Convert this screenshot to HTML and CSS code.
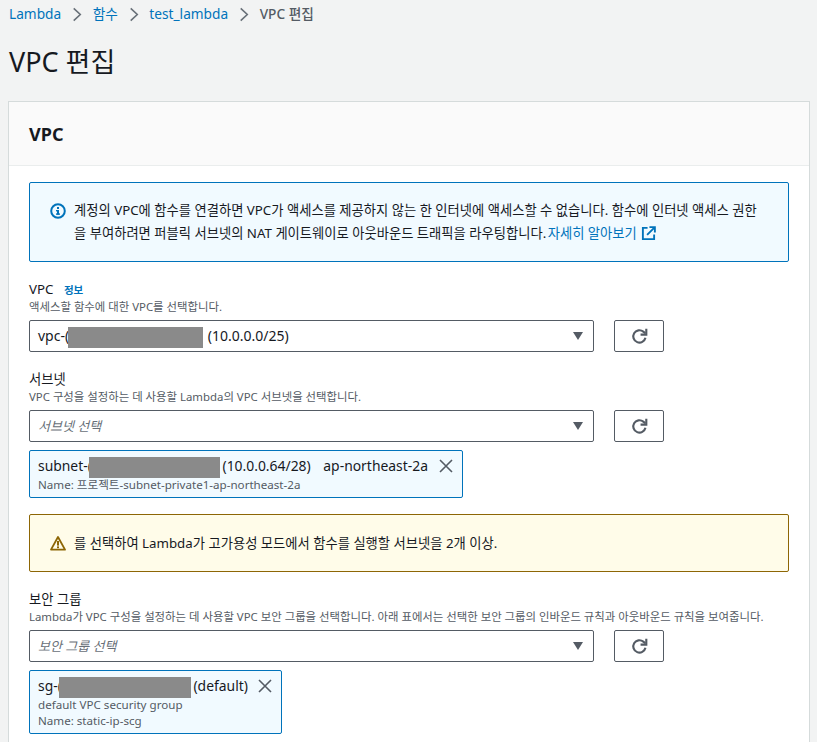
FILE: index.html
```html
<!DOCTYPE html>
<html lang="ko">
<head>
    <meta charset="utf-8">
    <title>VPC 편집</title>
    <link rel="stylesheet" href="styles.css">
</head>
<body>
    <svg class="defs" width="0" height="0">
        <symbol id="refresh" viewBox="0 0 16 16">
            <path d="M13.6 9.2A5.8 5.8 0 1 1 11.6 3.4L13.4 5" fill="none" stroke="currentColor" stroke-width="2"/>
            <path d="M14.4 .8V6.2H9" fill="none" stroke="currentColor" stroke-width="2"/>
        </symbol>
        <symbol id="close" viewBox="0 0 16 16">
            <path d="M2 2L14 14M14 2L2 14" fill="none" stroke="currentColor" stroke-width="1.6"/>
        </symbol>
    </svg>

    <nav class="crumbs">
        <a href="#">Lambda</a>
        <svg class="sep" viewBox="0 0 10 16"><path d="M1.5 1.5L8.5 8L1.5 14.5" fill="none" stroke="currentColor" stroke-width="1.7"/></svg>
        <a href="#">함수</a>
        <svg class="sep" viewBox="0 0 10 16"><path d="M1.5 1.5L8.5 8L1.5 14.5" fill="none" stroke="currentColor" stroke-width="1.7"/></svg>
        <a href="#">test_lambda</a>
        <svg class="sep" viewBox="0 0 10 16"><path d="M1.5 1.5L8.5 8L1.5 14.5" fill="none" stroke="currentColor" stroke-width="1.7"/></svg>
        <span class="crumb-current">VPC 편집</span>
    </nav>

    <h1 class="page-title">VPC 편집</h1>

    <div class="card">
        <div class="card-head">VPC</div>
        <div class="card-body">
            <div class="alert alert-info">
                <svg class="alert-icon" viewBox="0 0 16 16">
                    <circle cx="8" cy="8" r="6.8" fill="none" stroke="#0073bb" stroke-width="2"/>
                    <rect x="7" y="7" width="2" height="4.6" fill="#0073bb"/>
                    <rect x="6" y="7" width="2" height="1.4" fill="#0073bb"/>
                    <rect x="6" y="10.4" width="4" height="1.4" fill="#0073bb"/>
                    <rect x="7" y="4" width="2" height="2" fill="#0073bb"/>
                </svg>
                <p>계정의 VPC에 함수를 연결하면 VPC가 액세스를 제공하지 않는 한 인터넷에 액세스할 수 없습니다. 함수에 인터넷 액세스 권한<br>을 부여하려면 퍼블릭 서브넷의 NAT 게이트웨이로 아웃바운드 트래픽을 라우팅합니다. <a class="learn" href="#">자세히 알아보기</a>
                    <svg class="ext" viewBox="0 0 16 16">
                        <path d="M7 2H2V14H14V9" fill="none" stroke="#0073bb" stroke-width="2"/>
                        <path d="M6.5 9.5L14 2M9 1.2H14.8V7" fill="none" stroke="#0073bb" stroke-width="2"/>
                    </svg>
                </p>
            </div>

            <div class="field">
                <div class="label">VPC <a class="info" href="#">정보</a></div>
                <div class="desc">액세스할 함수에 대한 VPC를 선택합니다.</div>
                <div class="select-row">
                    <div class="select">vpc-(<span class="mask mask-vpc"></span> (10.0.0.0/25)<i class="caret"></i></div>
                    <button class="refresh" type="button"><svg><use href="#refresh"/></svg></button>
                </div>
            </div>

            <div class="field">
                <div class="label">서브넷</div>
                <div class="desc">VPC 구성을 설정하는 데 사용할 Lambda의 VPC 서브넷을 선택합니다.</div>
                <div class="select-row">
                    <div class="select placeholder">서브넷 선택<i class="caret"></i></div>
                    <button class="refresh" type="button"><svg><use href="#refresh"/></svg></button>
                </div>
                <div class="token token-subnet">
                    <div>
                        <div class="token-main">subnet-(<span class="mask mask-subnet"></span> (10.0.0.64/28) <span class="az">ap-northeast-2a</span></div>
                        <div class="token-sub">Name: 프로젝트-subnet-private1-ap-northeast-2a</div>
                    </div>
                    <svg class="token-x"><use href="#close"/></svg>
                </div>
            </div>

            <div class="alert alert-warn">
                <svg class="alert-icon" viewBox="0 0 16 16">
                    <path d="M8 2L15 14.6H1Z" fill="none" stroke="#8d6605" stroke-width="1.8" stroke-linejoin="round"/>
                    <rect x="7" y="6" width="2" height="4.6" fill="#8d6605"/>
                    <rect x="7" y="11.4" width="2" height="1.8" fill="#8d6605"/>
                </svg>
                <p>를 선택하여 Lambda가 고가용성 모드에서 함수를 실행할 서브넷을 2개 이상.</p>
            </div>

            <div class="field">
                <div class="label">보안 그룹</div>
                <div class="desc">Lambda가 VPC 구성을 설정하는 데 사용할 VPC 보안 그룹을 선택합니다. 아래 표에서는 선택한 보안 그룹의 인바운드 규칙과 아웃바운드 규칙을 보여줍니다.</div>
                <div class="select-row">
                    <div class="select placeholder">보안 그룹 선택<i class="caret"></i></div>
                    <button class="refresh" type="button"><svg><use href="#refresh"/></svg></button>
                </div>
                <div class="token token-sg">
                    <div>
                        <div class="token-main">sg-(<span class="mask mask-sg"></span> (default)</div>
                        <div class="token-sub">default VPC security group</div>
                        <div class="token-sub">Name: static-ip-scg</div>
                    </div>
                    <svg class="token-x"><use href="#close"/></svg>
                </div>
            </div>
        </div>
    </div>
</body>
</html>
```

FILE: styles.css
```css
* {
    box-sizing: border-box;
}

body {
    margin: 0;
    background-color: #f2f3f3;
    color: #16191f;
    font-family: "Noto Sans", "Noto Sans CJK KR", sans-serif;
    font-size: 14px;
    line-height: 20px;
}

a {
    color: #0073bb;
    text-decoration: none;
}

.defs {
    display: block;
    height: 0;
}

.crumbs {
    display: flex;
    align-items: center;
    height: 28px;
    padding-left: 9px;
    font-size: 13.7px;
}

.sep {
    width: 10px;
    height: 15px;
    margin: 0 10.5px 0 11px;
    color: #687078;
}

.crumb-current {
    color: #545b64;
    font-weight: 500;
}

.page-title {
    margin: 0;
    padding: 16px 0 0 9px;
    height: 73px;
    font-size: 27px;
    line-height: 36px;
    font-weight: 400;
}

.card {
    margin: 0 7px 0 8px;
    height: 641px;
    background-color: #fff;
    border: 1px solid #d5dbdb;
    border-bottom: none;
}

.card-head {
    height: 64px;
    padding: 21px 20px 0;
    background-color: #fafafa;
    border-bottom: 1px solid #eaeded;
    font-size: 18px;
    line-height: 22px;
    font-weight: 700;
}

.card-body {
    padding: 16px 20px 0;
}

.alert {
    display: flex;
    width: 760px;
    border: 1px solid;
    border-radius: 2px;
    padding: 0 20px;
    font-size: 13.3px;
}

.alert p {
    margin: 0;
    white-space: nowrap;
}

.alert-info {
    height: 80px;
    padding-top: 16px;
    background-color: #f1faff;
    border-color: #0073bb;
    line-height: 23px;
}

.alert-warn {
    height: 58px;
    margin-top: 16px;
    align-items: center;
    background-color: #fffce9;
    border-color: #8d6605;
}

.alert-icon {
    flex: none;
    width: 16px;
    height: 16px;
    margin-right: 8px;
}

.alert-info .alert-icon {
    margin-top: 4px;
}

.learn {
    margin-left: -2px;
}

.ext {
    width: 15px;
    height: 15px;
    margin-left: 1px;
    vertical-align: -3px;
}

.field {
    margin-top: 17px;
}

.label {
    height: 20px;
    font-size: 13.3px;
    line-height: 20px;
}

.info {
    margin-left: 7px;
    font-size: 10.5px;
    font-weight: 700;
}

.desc {
    height: 14px;
    margin-top: 1px;
    font-size: 11.4px;
    line-height: 14px;
    color: #545b64;
    white-space: nowrap;
}

.select-row {
    display: flex;
    gap: 20px;
    margin-top: 6px;
}

.select {
    position: relative;
    width: 565px;
    height: 32px;
    padding-left: 8px;
    border: 1px solid #545b64;
    border-radius: 2px;
    font-size: 14px;
    line-height: 30px;
    white-space: nowrap;
}

.placeholder {
    color: #687078;
    font-size: 13px;
    font-style: italic;
}

.caret {
    position: absolute;
    right: 10px;
    top: 11px;
    width: 0;
    height: 0;
    border-left: 5px solid transparent;
    border-right: 5px solid transparent;
    border-top: 8px solid #545b64;
}

.refresh {
    display: flex;
    align-items: center;
    justify-content: center;
    width: 50px;
    height: 32px;
    padding: 0;
    background-color: #fff;
    border: 1px solid #545b64;
    border-radius: 2px;
    color: #545b64;
}

.refresh svg {
    width: 17px;
    height: 17px;
}

.mask {
    display: inline-block;
    height: 21px;
    margin-left: -3px;
    vertical-align: middle;
    background-color: #8a8a8a;
}

.mask-vpc {
    width: 135px;
    margin-left: -1px;
    margin-right: 1px;
}

.mask-subnet {
    width: 131px;
    margin-right: -1px;
}

.mask-sg {
    width: 132px;
    margin-right: -1px;
}

.az {
    margin-left: 9px;
}

.token {
    display: flex;
    justify-content: space-between;
    margin-top: 8px;
    padding: 4px 8px 0;
    background-color: #f1faff;
    border: 1px solid #0073bb;
    border-radius: 2px;
}

.token-subnet {
    width: 434px;
    height: 48px;
}

.token-sg {
    width: 253px;
    height: 64px;
}

.token-main {
    height: 22px;
    font-size: 13.9px;
    line-height: 22px;
    white-space: nowrap;
}

.token-sub {
    font-size: 11.6px;
    line-height: 16px;
    color: #545b64;
    white-space: nowrap;
}

.token-x {
    flex: none;
    width: 16px;
    height: 16px;
    margin-top: 3px;
    color: #545b64;
}
```
